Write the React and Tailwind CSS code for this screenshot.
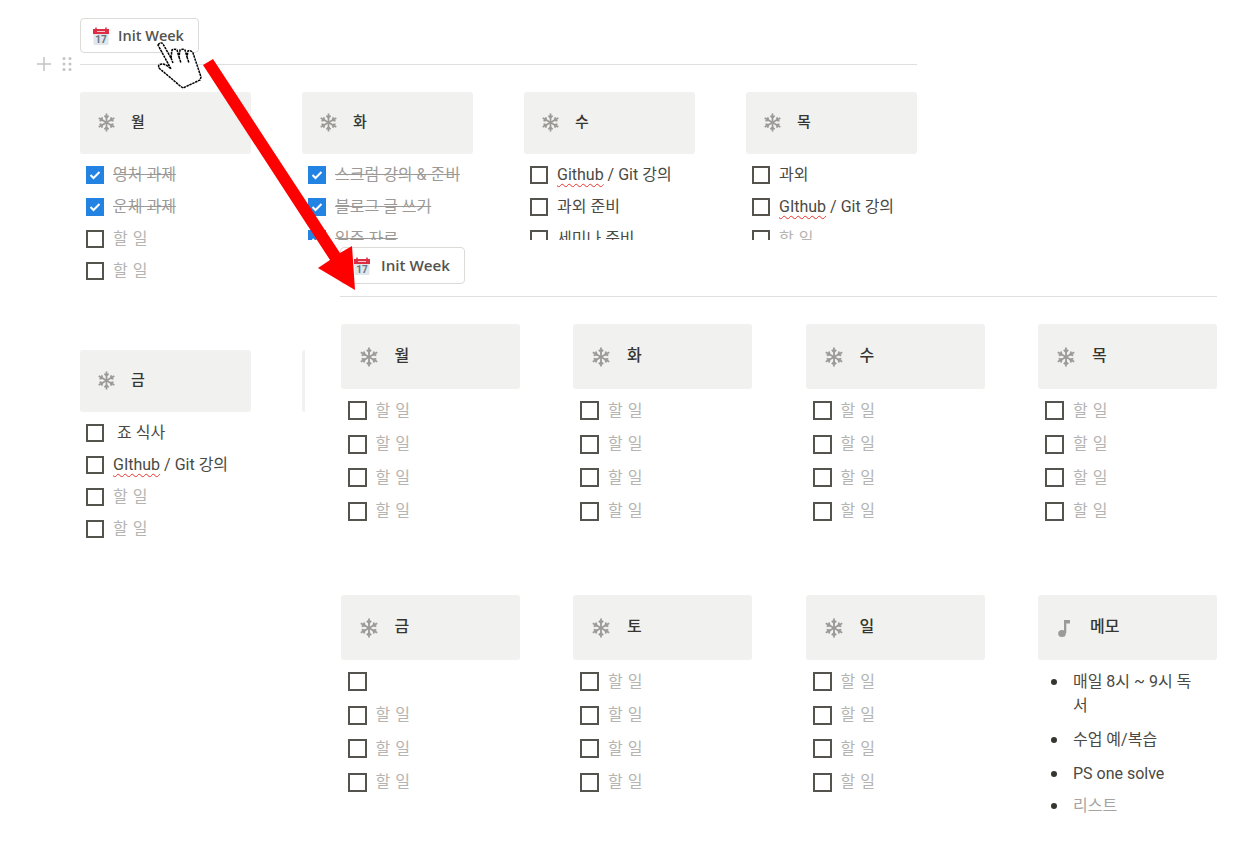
const Snowflake = ({ size = 20 }) => (
  <svg width={size} height={size} viewBox="0 0 20 20" fill="none" stroke="#9b9a97" strokeWidth="1.800" className="shrink-0">
    {[0, 60, 120, 180, 240, 300].map((a) => (
      <g key={a} transform={`rotate(${a} 10 10)`}>
        <path d="M10 10V0.500" />
        <path d="M7.800 2.800L10 5l2.200-2.200" />
      </g>
    ))}
  </svg>
);

const Note = () => (
  <svg width="18" height="20" viewBox="0 0 18 20" fill="#9b9a97" className="shrink-0">
    <ellipse cx="6" cy="15.500" rx="3.800" ry="3.500" />
    <path d="M8 15V2h6v3.500h-3.700V15z" />
  </svg>
);

const Calendar = () => (
  <svg width="18" height="18" viewBox="0 0 18 18" className="shrink-0">
    <rect x="1.500" y="3" width="15" height="15" rx="1" fill="#dfe6ec" />
    <rect x="1" y="2" width="16" height="5" fill="#dd2e44" />
    <path d="M4 0.500v2M14 0.500v2" stroke="#dd2e44" strokeWidth="1.500" />
    <path d="M5 4.500h8" stroke="#f5c6cc" strokeWidth="1" />
    <text x="9" y="16" textAnchor="middle" fontSize="10" fontWeight="700" fill="#66757f" fontFamily="Roboto, sans-serif">
      17
    </text>
  </svg>
);

const Box = ({ done, front }) =>
  done ? (
    <span className="w-[18px] h-[18px] shrink-0 bg-[#2383e2] flex items-center justify-center">
      <svg width="14" height="14" viewBox="0 0 14 14" fill="none" stroke="#fff" strokeWidth="2">
        <path d="M2.500 7l3 3 6-6" />
      </svg>
    </span>
  ) : (
    <span className={`${front ? "w-[19px] h-[19px]" : "w-[18px] h-[18px]"} shrink-0 border-2 border-[#55534e] bg-white`} />
  );

const Spell = ({ children }) => (
  <span className="underline decoration-wavy decoration-[#e8322e] decoration-[1.200px] underline-offset-3">{children}</span>
);

// one to-do line; text is gray when it is still the placeholder
const Todo = ({ text, done, front }) => {
  const empty = text === undefined;
  return (
    <div className={`flex items-center text-[16px] ${front ? "h-[33.500px] pl-[7px] gap-[9px]" : "h-8 pl-[6px] gap-[9px]"}`}>
      <Box done={done} front={front} />
      <span className={`whitespace-nowrap ${done ? "text-[#9b9a97] line-through" : empty ? "text-[#b5b4b1] tracking-[0.5px]" : "text-[#4a4944]"}`}>
        {empty ? "할 일" : text}
      </span>
    </div>
  );
};

const Card = ({ icon, title, front }) => (
  <div className={`bg-[#f1f1ef] rounded-[3px] flex items-center ${front ? "h-[65px] pl-[18px] gap-[16px]" : "h-[61.500px] pl-[17px] gap-[15px]"}`}>
    {icon || <Snowflake size={front ? 20 : 19} />}
    <span className={`text-[#37352f] font-medium pb-px ${front ? "text-[16px]" : "text-[15px]"}`}>{title}</span>
  </div>
);

const Column = ({ title, items, front, icon, children }) => (
  <div className={front ? "w-[179px]" : "w-[171px]"}>
    <Card title={title} front={front} icon={icon} />
    {children || (
      <div className="pt-[5px]">
        {items.map((it, i) => (
          <Todo key={i} front={front} {...it} />
        ))}
      </div>
    )}
  </div>
);

const InitButton = ({ big }) => (
  <div
    className={`flex items-center bg-white border border-[#dcdbd8] rounded-[4px] text-[#55534e] font-semibold font-['Open_Sans','Noto_Sans_CJK_KR',sans-serif] ${big ? "w-[125px] h-[37px] pl-[12px] gap-[10px] text-[15.200px]" : "w-[119px] h-[35px] pl-[11px] gap-[8px] text-[14.500px]"}`}
  >
    <Calendar />
    <span>Init Week</span>
  </div>
);

const Bullet = ({ children, className }) => (
  <div className={`flex leading-[24px] ${className}`}>
    <span className="w-[6px] h-[6px] mt-[9px] mr-[16px] rounded-full bg-[#37352f] shrink-0" />
    <span>{children}</span>
  </div>
);

const blank = [{}, {}, {}, {}];

export default function App() {
  return (
    <div className="relative w-[1254px] h-[844px] bg-white overflow-hidden font-['Roboto','Noto_Sans_CJK_KR',sans-serif]">
      {/* back layer: page before the button is clicked */}
      <div className="pt-[18px] pl-[80px] w-[917px]">
        <InitButton />
        <div className="relative mt-[11px] border-t border-[#dfdfde]">
          <div className="absolute -left-[44px] -top-[9px] flex items-center gap-[10px] text-[#c4c4c2]">
            <svg width="16" height="16" viewBox="0 0 16 16" stroke="currentColor" strokeWidth="1.500">
              <path d="M8 1v14M1 8h14" />
            </svg>
            <svg width="10" height="16" viewBox="0 0 10 16" fill="currentColor">
              <circle cx="2" cy="2.500" r="1.500" />
              <circle cx="8" cy="2.500" r="1.500" />
              <circle cx="2" cy="8" r="1.500" />
              <circle cx="8" cy="8" r="1.500" />
              <circle cx="2" cy="13.500" r="1.500" />
              <circle cx="8" cy="13.500" r="1.500" />
            </svg>
          </div>
        </div>
        <div className="mt-[27px] flex gap-[51px]">
          <Column title="월" items={[{ text: "영처 과제", done: true }, { text: "운체 과제", done: true }, {}, {}]} />
          <Column
            title="화"
            items={[
              { text: "스크럼 강의 & 준비", done: true },
              { text: "블로그 글 쓰기", done: true },
              { text: "일주 자료", done: true },
            ]}
          />
          <Column
            title="수"
            items={[{ text: <><Spell>Github</Spell> / Git 강의</> }, { text: "과외 준비" }, { text: "세미나 준비" }]}
          />
          <Column title="목" items={[{ text: "과외" }, { text: <><Spell>GIthub</Spell> / Git 강의</> }, {}]} />
        </div>
        <div className="mt-[63.500px] flex gap-[51px]">
          <Column
            title="금"
            items={[{ text: <span className="pl-[4px]">죠 식사</span> }, { text: <><Spell>GIthub</Spell> / Git 강의</> }, {}, {}]}
          />
          <Column title="" items={[]} />
        </div>
      </div>

      {/* front layer: the template that gets inserted */}
      <div className="absolute left-[305px] top-[240px] w-[949px] h-[604px] bg-white pl-[35px] pt-[7px]">
        <InitButton big />
        <div className="mt-[12px] w-[877px] border-t border-[#dfdfde]" />
        <div className="mt-[27px] ml-[0.6px] w-[876.400px] flex justify-between">
          <Column front title="월" items={blank} />
          <Column front title="화" items={blank} />
          <Column front title="수" items={blank} />
          <Column front title="목" items={blank} />
        </div>
        <div className="mt-[67px] ml-[0.6px] w-[876.400px] flex justify-between">
          <Column front title="금" items={[{ text: "" }, {}, {}, {}]} />
          <Column front title="토" items={blank} />
          <Column front title="일" items={blank} />
          <Column front title="메모" icon={<Note />}>
            <div className="pt-[10px] pl-[13px] pr-[14px] text-[16px] text-[#4a4944]">
              <Bullet>매일 8시 ~ 9시 독서</Bullet>
              <Bullet className="mt-[10px]">수업 예/복습</Bullet>
              <Bullet className="mt-[10px]">PS one solve</Bullet>
              <Bullet className="mt-[8px] text-[#a5a4a1]">리스트</Bullet>
            </div>
          </Column>
        </div>
      </div>

      {/* red annotation arrow */}
      <svg className="absolute left-0 top-0 pointer-events-none" width="1254" height="844" fill="#ff0000">
        <polygon points="203,65 213,59 340,253 352,246 355,290 318,268 330,260" />
      </svg>

      {/* hand cursor */}
      <svg className="absolute left-[150px] top-[35px]" width="60" height="60" viewBox="0 0 60 60" fill="#fff" stroke="#000" strokeWidth="1.500" strokeDasharray="2.500 0.700">
        <path d="M8 10c1-2 4-3 5-1l8 14 1-8c2-1 4-1 5 0l2 7 1-7c2-1 4-1 5 0l2 7 1-6c2-1 4 0 5 2l8 24-1 3-17 8-4-3-7-6-12-10c-3-3-1-5 2-5 3 0 6 2 9 5L8 10z" />
        <path d="M21 23l2 5M29 22l2 6M37 22l2 6" fill="none" />
      </svg>
    </div>
  );
}
